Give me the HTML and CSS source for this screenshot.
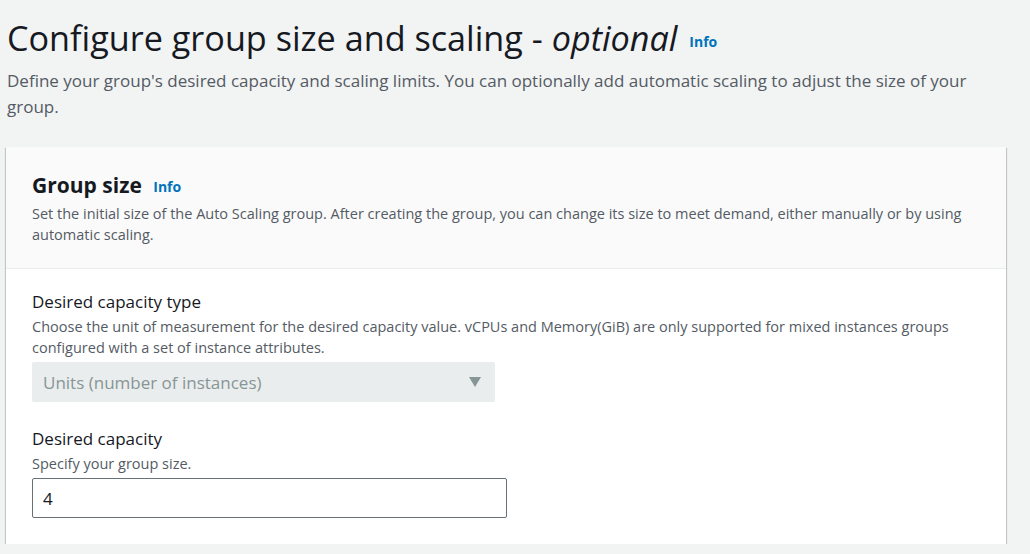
FILE: index.html
```html
<!DOCTYPE html>
<html lang="en">
<head>
<meta charset="utf-8">
<title>Configure group size and scaling</title>
<link rel="stylesheet" href="styles.css">
</head>
<body>
<main class="page">
  <header class="page-header">
    <h1 class="page-title">Configure group size and scaling - <em>optional</em> <a class="info info-lg" href="#">Info</a></h1>
    <p class="page-desc">Define your group's desired capacity and scaling limits. You can optionally add automatic scaling to adjust the size of your group.</p>
  </header>
  <section class="card">
    <div class="card-header">
      <h2 class="card-title">Group size <a class="info" href="#">Info</a></h2>
      <p class="card-desc">Set the initial size of the Auto Scaling group. After creating the group, you can change its size to meet demand, either manually or by using automatic scaling.</p>
    </div>
    <div class="card-body">
      <div class="field">
        <div class="label">Desired capacity type</div>
        <div class="hint">Choose the unit of measurement for the desired capacity value. vCPUs and Memory(GiB) are only supported for mixed instances groups configured with a set of instance attributes.</div>
        <div class="select">
          <span>Units (number of instances)</span>
          <svg class="caret" width="12" height="10" viewBox="0 0 12 10"><path d="M0 0 H12 L6 10 Z" fill="#879596"/></svg>
        </div>
      </div>
      <div class="field">
        <div class="label">Desired capacity</div>
        <div class="hint">Specify your group size.</div>
        <div class="input">4</div>
      </div>
    </div>
  </section>
</main>
</body>
</html>
```
FILE: styles.css
```css
html, body {
  margin: 0;
  padding: 0;
  background: #f2f3f3;
}
body {
  font-family: "Open Sans", "Noto Sans", sans-serif;
  color: #16191f;
}
.page {
  padding: 16px 24px 0 6px;
}
.page-header {
  padding-left: 1px;
}
.page-title {
  margin: 0;
  font-size: 34.2px;
  font-weight: 400;
  line-height: 44px;
  color: #16191f;
}
.page-title em {
  font-style: italic;
}
.info {
  color: #0073bb;
  font-weight: 700;
  font-size: 14px;
  text-decoration: none;
  vertical-align: middle;
  margin-left: 3px;
}
.page-desc {
  margin: 4px 0 0;
  font-size: 17px;
  line-height: 26px;
  color: #545b64;
}
.card {
  margin-top: 27px;
  width: 1000px;
  background: #fff;
  box-shadow: 0 1px 1px 0 rgba(0,28,36,0.35), 1px 1px 1px 0 rgba(0,28,36,0.15), -1px 1px 1px 0 rgba(0,28,36,0.15);
}
.card-header {
  background: #fafafa;
  border-bottom: 1px solid #eaeded;
  padding: 23px 26px 23px;
}
.card-title {
  margin: 0;
  font-size: 21px;
  line-height: 30px;
  font-weight: 700;
}
.card-title .info {
  font-size: 14px;
  margin-left: 6px;
}
.card-desc {
  margin: 1px 0 0;
  font-size: 14.5px;
  line-height: 21px;
  color: #545b64;
}
.card-body {
  padding: 20px 26px 26px;
  display: flex;
  flex-direction: column;
  gap: 24px;
}
.label {
  font-size: 17px;
  line-height: 26px;
  color: #16191f;
}
.hint {
  margin-top: 1px;
  font-size: 14.5px;
  line-height: 21px;
  color: #545b64;
}
.select {
  margin-top: 4px;
  width: 463px;
  height: 40px;
  box-sizing: border-box;
  background: #eaeded;
  border-radius: 2px;
  display: flex;
  align-items: center;
  justify-content: space-between;
  padding: 0 14px 0 11px;
  font-size: 17px;
  color: #879596;
}
.input {
  margin-top: 4px;
  width: 475px;
  height: 40px;
  box-sizing: border-box;
  border: 1px solid #687078;
  border-radius: 2px;
  background: #fff;
  display: flex;
  align-items: center;
  padding: 0 10px;
  font-size: 17px;
  color: #16191f;
}
```
